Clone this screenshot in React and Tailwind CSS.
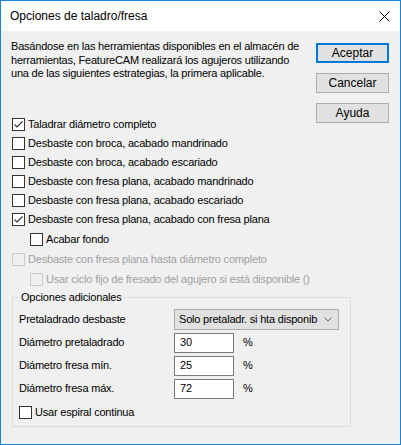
import React from 'react';

const font = { fontFamily: '"Liberation Sans", Arial, sans-serif' };

const Check = ({ checked, disabled }) => (
  <span
    className={`flex h-[13px] w-[13px] shrink-0 items-center justify-center border ${
      disabled ? 'border-[#cccccc] bg-[#f0f0f0]' : 'border-[#333333] bg-white'
    }`}
  >
    {checked && (
      <svg width="11" height="11" viewBox="0 0 11 11">
        <path d="M1.5 5.5 L4 8 L9.5 2.5" fill="none" stroke="#333333" strokeWidth="1.1" />
      </svg>
    )}
  </span>
);

const CheckRow = ({ label, checked, disabled, indent, h = 'h-[19px]' }) => (
  <div className={`flex items-center gap-[3px] ${h} ${indent ? 'pl-[19px]' : 'pl-[1px]'}`}>
    <Check checked={checked} disabled={disabled} />
    <span className={`whitespace-nowrap ${disabled ? 'text-[#a0a0a0]' : 'text-black'}`}>{label}</span>
  </div>
);

const Btn = ({ children, primary }) => (
  <button
    className={`flex h-[20px] w-[73px] items-center justify-center bg-[#e1e1e1] text-[12px] tracking-normal text-black ${
      primary ? 'border-2 border-[#0078d7]' : 'border border-[#adadad]'
    }`}
  >
    {children}
  </button>
);

const NumRow = ({ label, value }) => (
  <div className="mt-[3px] flex h-[20px] items-center">
    <span className="w-[155px] whitespace-nowrap">{label}</span>
    <div className="flex h-[20px] w-[60px] items-center border border-[#7a7a7a] bg-white pl-[5px]">{value}</div>
    <span className="ml-[9px]">%</span>
  </div>
);

export default function App() {
  return (
    <div style={font} className="flex h-[445px] w-[401px] flex-col overflow-hidden border border-[#1883d7] bg-[#f0f0f0] text-[11px] tracking-[-0.2px] text-black">
      {/* title bar */}
      <div className="flex h-[30px] shrink-0 items-center justify-between bg-white pl-[9px] pr-[10px] text-[12px] tracking-normal">
        <span>Opciones de taladro/fresa</span>
        <svg width="11" height="11" viewBox="0 0 11 11">
          <path d="M0.5 0.5 L10.5 10.5 M10.5 0.5 L0.5 10.5" stroke="#000" strokeWidth="1" />
        </svg>
      </div>

      <div className="flex flex-1">
        {/* left column */}
        <div className="min-w-0 flex-1 pl-[10px] pt-[9px]">
          <p className="whitespace-nowrap leading-[13.5px]">
            Basándose en las herramientas disponibles en el almacén de
            <br />
            herramientas, FeatureCAM realizará los agujeros utilizando
            <br />
            una de las siguientes estrategias, la primera aplicable.
          </p>

          <div className="mt-[34px]">
            <CheckRow label="Taladrar diámetro completo" checked />
            <CheckRow label="Desbaste con broca, acabado mandrinado" />
            <CheckRow label="Desbaste con broca, acabado escariado" />
            <CheckRow label="Desbaste con fresa plana, acabado mandrinado" />
            <CheckRow label="Desbaste con fresa plana, acabado escariado" />
            <CheckRow label="Desbaste con fresa plana, acabado con fresa plana" checked />
            <div className="mt-[1px]">
              <CheckRow label="Acabar fondo" indent h="h-[20px]" />
              <CheckRow label="Desbaste con fresa plana hasta diámetro completo" disabled h="h-[20px]" />
              <CheckRow label="Usar ciclo fijo de fresado del agujero si está disponible ()" disabled indent h="h-[20px]" />
            </div>
          </div>

          {/* group box */}
          <div className="relative ml-[1px] mt-[7px] w-[339px] border border-[#dcdcdc] px-[6px] pb-[7px] pt-[11px]">
            <span className="absolute left-[7px] top-[-8px] bg-[#f0f0f0] px-[1px] leading-[14px]">Opciones adicionales</span>
            <div className="flex h-[21px] items-center">
              <span className="w-[155px] whitespace-nowrap">Pretaladrado desbaste</span>
              <div className="flex h-[21px] w-[165px] items-center justify-between border border-[#adadad] bg-[#e1e1e1] pl-[4px] pr-[6px]">
                <span className="whitespace-nowrap">Solo pretaladr. si hta disponib</span>
                <svg width="8" height="5" viewBox="0 0 8 5">
                  <path d="M0.5 0.5 L4 4 L7.5 0.5" fill="none" stroke="#606060" strokeWidth="1" />
                </svg>
              </div>
            </div>
            <NumRow label="Diámetro pretaladrado" value="30" />
            <NumRow label="Diámetro fresa mín." value="25" />
            <NumRow label="Diámetro fresa máx." value="72" />
            <div className="mt-[7px] flex h-[13px] items-center gap-[3px]">
              <Check />
              <span className="whitespace-nowrap">Usar espiral continua</span>
            </div>
          </div>
        </div>

        {/* buttons */}
        <div className="mr-[11px] flex shrink-0 flex-col gap-[10px] pt-[12px]">
          <Btn primary>Aceptar</Btn>
          <Btn>Cancelar</Btn>
          <Btn>Ayuda</Btn>
        </div>
      </div>
    </div>
  );
}
